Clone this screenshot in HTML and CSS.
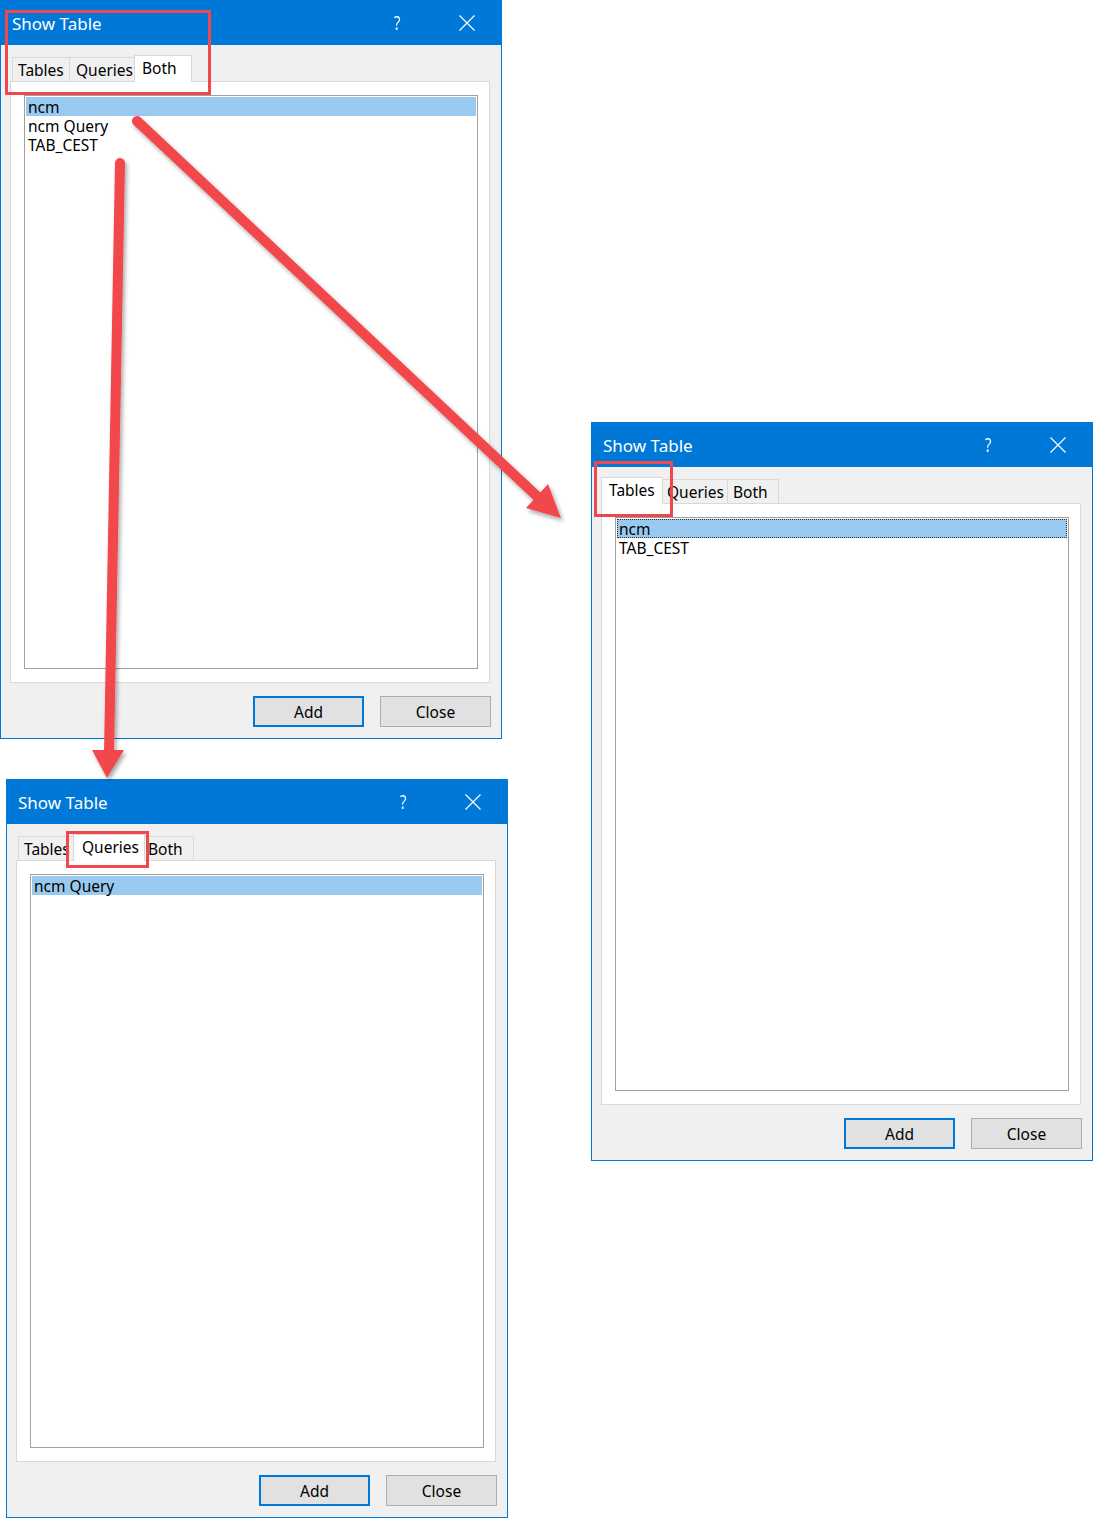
FILE: index.html
```html
<!DOCTYPE html>
<html lang="en">
<head>
<meta charset="utf-8">
<title>Show Table</title>
<link rel="stylesheet" href="styles.css">
</head>
<body>
<div class="canvas">

  <div class="dialog d1">
    <div class="titlebar">
      <span class="title">Show Table</span>
      <span class="help">?</span>
      <svg class="xicon" width="16" height="16" viewBox="0 0 16 16"><path d="M0.5 0.5 L15.5 15.5 M15.5 0.5 L0.5 15.5" stroke="#fff" stroke-width="1.2" fill="none"/></svg>
    </div>
    <div class="body">
      <div class="tabs">
        <div class="tab t-tables">Tables</div>
        <div class="tab t-queries">Queries</div>
        <div class="tab t-both active">Both</div>
      </div>
      <div class="panel">
        <div class="list">
          <div class="row sel">ncm</div>
          <div class="row">ncm Query</div>
          <div class="row">TAB_CEST</div>
        </div>
      </div>
      <div class="buttons">
        <button class="btn default">Add</button>
        <button class="btn">Close</button>
      </div>
    </div>
  </div>

  <div class="dialog d2">
    <div class="titlebar">
      <span class="title">Show Table</span>
      <span class="help">?</span>
      <svg class="xicon" width="16" height="16" viewBox="0 0 16 16"><path d="M0.5 0.5 L15.5 15.5 M15.5 0.5 L0.5 15.5" stroke="#fff" stroke-width="1.2" fill="none"/></svg>
    </div>
    <div class="body">
      <div class="tabs">
        <div class="tab t-tables active">Tables</div>
        <div class="tab t-queries">Queries</div>
        <div class="tab t-both">Both</div>
      </div>
      <div class="panel">
        <div class="list">
          <div class="row sel focus">ncm</div>
          <div class="row">TAB_CEST</div>
        </div>
      </div>
      <div class="buttons">
        <button class="btn default">Add</button>
        <button class="btn">Close</button>
      </div>
    </div>
  </div>

  <div class="dialog d3">
    <div class="titlebar">
      <span class="title">Show Table</span>
      <span class="help">?</span>
      <svg class="xicon" width="16" height="16" viewBox="0 0 16 16"><path d="M0.5 0.5 L15.5 15.5 M15.5 0.5 L0.5 15.5" stroke="#fff" stroke-width="1.2" fill="none"/></svg>
    </div>
    <div class="body">
      <div class="tabs">
        <div class="tab t-tables">Tables</div>
        <div class="tab t-queries active">Queries</div>
        <div class="tab t-both">Both</div>
      </div>
      <div class="panel">
        <div class="list">
          <div class="row sel">ncm Query</div>
        </div>
      </div>
      <div class="buttons">
        <button class="btn default">Add</button>
        <button class="btn">Close</button>
      </div>
    </div>
  </div>

  <svg class="overlay" width="1093" height="1518" viewBox="0 0 1093 1518">
    <defs>
      <filter id="shadow" x="-10%" y="-10%" width="130%" height="130%">
        <feDropShadow dx="2" dy="3" stdDeviation="2" flood-color="#000" flood-opacity="0.35"/>
      </filter>
    </defs>
    <rect class="mark" x="6.5" y="11.5" width="203" height="82"/>
    <rect class="mark" x="595.5" y="462.5" width="76" height="53"/>
    <rect class="mark" x="67.5" y="832.5" width="80" height="34"/>
    <g filter="url(#shadow)">
      <line class="shaft" x1="137" y1="121" x2="540" y2="499"/>
      <polygon class="head" points="561,518 526,508 548,484"/>
      <line class="shaft" x1="120" y1="163" x2="109" y2="753"/>
      <polygon class="head" points="107,778 92,750 124,750"/>
    </g>
  </svg>
</div>
</body>
</html>
```

FILE: styles.css
```css
* { box-sizing: border-box; }

html, body {
  margin: 0;
  padding: 0;
  background: #ffffff;
}

body {
  font-family: "Noto Sans", "Open Sans", sans-serif;
  font-size: 15.5px;
  color: #000;
}

.canvas {
  position: relative;
  width: 1093px;
  height: 1518px;
  overflow: hidden;
}

.dialog {
  position: absolute;
  width: 502px;
  height: 739px;
  border: 1px solid #0078d7;
  background: #f0f0f0;
  display: flex;
  flex-direction: column;
}

.d1 { left: 0; top: 0; }
.d2 { left: 591px; top: 422px; }
.d3 { left: 6px; top: 779px; }

.titlebar {
  height: 44px;
  background: #0078d7;
  display: flex;
  align-items: center;
  padding: 0 26px 0 11px;
  color: #fff;
  flex: none;
}

.title {
  font-size: 17px;
  flex: 1;
}

.help {
  font-size: 20px;
  color: #f4f8fc;
  margin-right: 57px;
  margin-top: -1px;
  display: inline-block;
  transform: scaleX(0.75);
}

.xicon {
  display: block;
  margin-top: -1px;
}

.body {
  flex: 1;
  display: flex;
  flex-direction: column;
  padding: 10px 11px 11px 9px;
}

.tabs {
  display: flex;
  align-items: flex-end;
  height: 26px;
  padding-left: 2px;
  flex: none;
}

.tab {
  height: 24px;
  line-height: 24px;
  padding: 0 4px 0 5px;
  border: 1px solid #d9d9d9;
  border-bottom: none;
  margin-right: -1px;
  background: #f0f0f0;
  white-space: nowrap;
}

.t-tables { width: 58px; }
.t-queries { width: 68px; padding-left: 6px; }
.t-both { width: 52px; }

.tab.active {
  height: 27px;
  line-height: 24px;
  margin: 0 -3px -1px -2px;
  padding-left: 7px;
  background: #fff;
  position: relative;
  z-index: 2;
}

.t-tables.active { width: 62px; }
.t-queries.active { width: 72px; padding-left: 8px; }
.t-both.active { width: 58px; margin-right: -5px; }

.panel {
  height: 602px;
  background: #fff;
  border: 1px solid #d9d9d9;
  padding: 13px 11px 13px 13px;
  flex: none;
}

.list {
  height: 100%;
  border: 1px solid #a0a0a0;
  padding: 1px;
  background: #fff;
}

.row {
  height: 19px;
  line-height: 21px;
  padding-left: 2px;
  white-space: nowrap;
}

.row.sel {
  background: #99c9ef;
}

.row.focus {
  outline: 1px dotted #333;
  outline-offset: -1px;
}

.buttons {
  display: flex;
  justify-content: flex-end;
  gap: 16px;
  margin-top: 13px;
  margin-right: -1px;
}

.btn {
  width: 111px;
  height: 31px;
  font-family: "Noto Sans", "Open Sans", sans-serif;
  font-size: 15.5px;
  color: #000;
  background: #e1e1e1;
  border: 1px solid #adadad;
  padding: 0;
  margin: 0;
}

.btn.default {
  border: 2px solid #0078d7;
}

.overlay {
  position: absolute;
  left: 0;
  top: 0;
  pointer-events: none;
  z-index: 10;
}

.mark {
  fill: none;
  stroke: #f0474c;
  stroke-width: 3;
}

.shaft {
  stroke: #f2474b;
  stroke-width: 10;
  stroke-linecap: round;
}

.head {
  fill: #f2474b;
}
```
